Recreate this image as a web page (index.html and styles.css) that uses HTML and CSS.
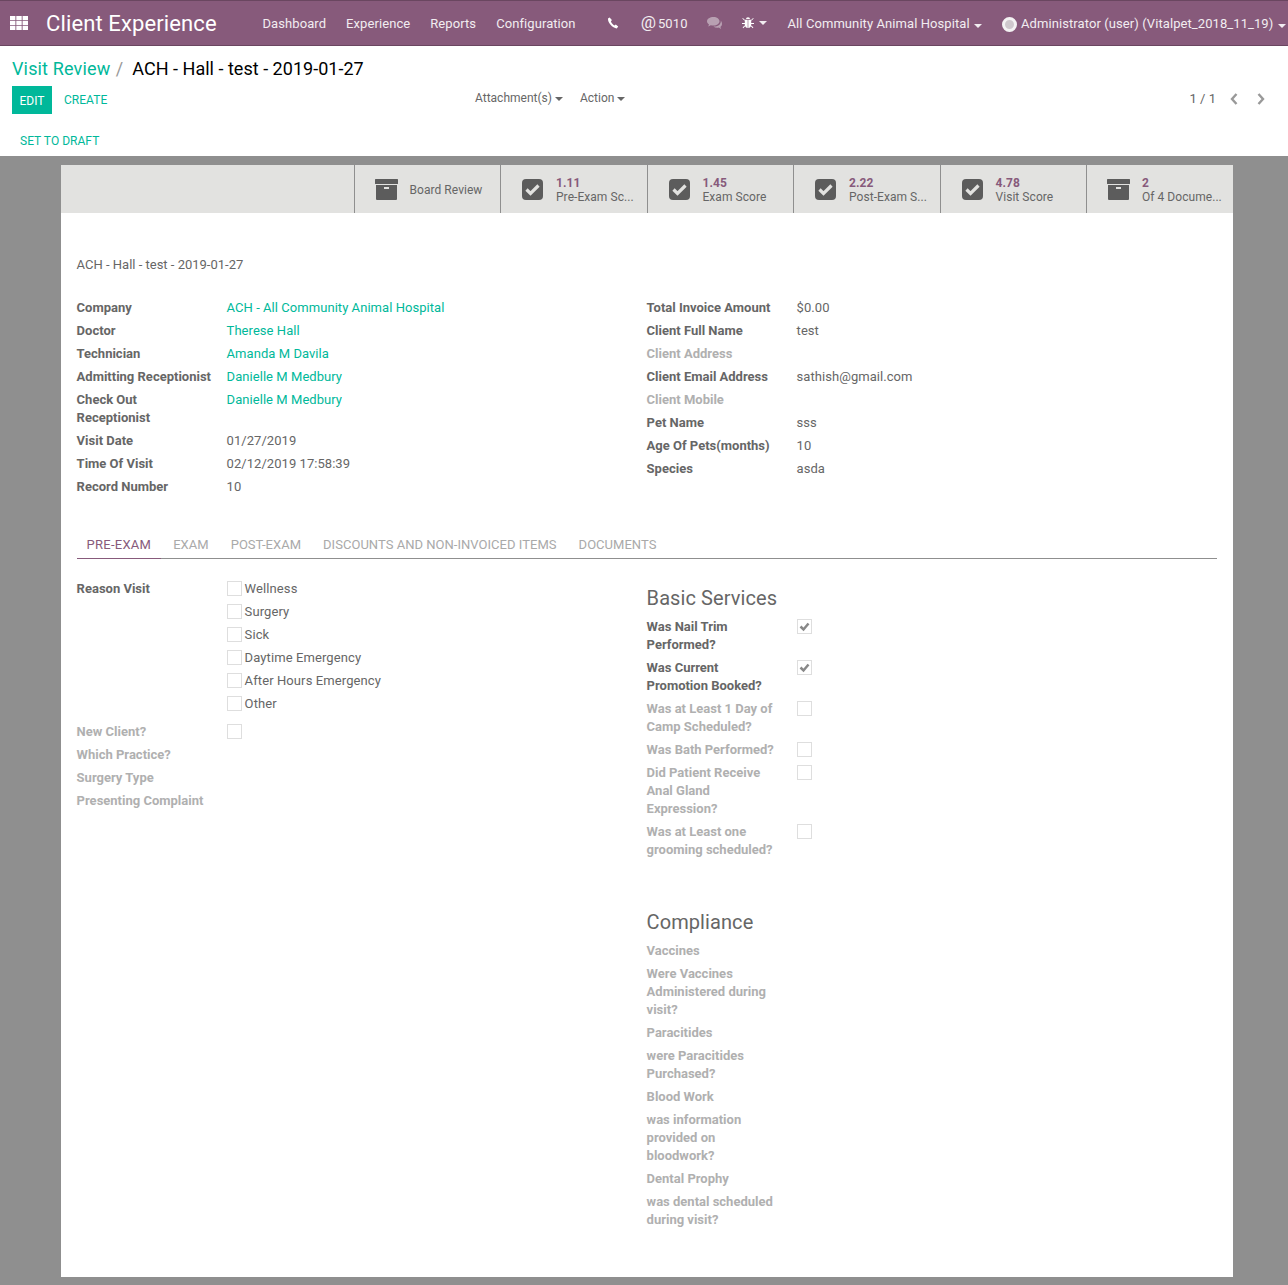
FILE: index.html
```html
<!doctype html>
<html>
  <head>
    <meta charset="utf-8">
    <title>Visit Review - Client Experience</title>
    <link rel="stylesheet" href="styles.css">
  </head>
  <body>
    <svg class="defs" width="0" height="0">
      <symbol id="archive" viewBox="0 0 23 21">
        <rect x="0" y="0" width="23" height="5" rx="0.5"/>
        <path d="M1 6h21v14a1 1 0 0 1-1 1H2a1 1 0 0 1-1-1z"/>
        <rect x="9" y="8" width="5" height="2" fill="#e2e2e0"/>
      </symbol>
      <symbol id="check" viewBox="0 0 21 21">
        <rect width="21" height="21" rx="4"/>
        <path d="M4.5 10.5l4 4 8-8" fill="none" stroke="#e2e2e0" stroke-width="3.2"/>
      </symbol>
    </svg>

    <nav class="navbar">
      <svg class="apps-icon" viewBox="0 0 18 14">
        <path d="M0 0h5.400v4.200H0zM6.300 0h5.400v4.200H6.300zM12.600 0H18v4.200h-5.400zM0 4.900h5.400v4.200H0zM6.300 4.900h5.400v4.200H6.300zM12.600 4.900H18v4.200h-5.400zM0 9.800h5.400V14H0zM6.300 9.800h5.400V14H6.300zM12.600 9.800H18V14h-5.400z"/>
      </svg>
      <span class="brand">Client Experience</span>
      <a class="nav-link first">Dashboard</a>
      <a class="nav-link">Experience</a>
      <a class="nav-link">Reports</a>
      <a class="nav-link">Configuration</a>
      <div class="nav-right">
        <svg class="phone-icon" viewBox="0 0 12 12">
          <path d="M2.600.6L1 1.600C.5 5.600 5.500 11.200 9.800 11.400l1.400-1.800-2.400-2.200-1.400 1C6 7.600 4.600 6 3.900 4.400l1-1.300z"/>
        </svg>
        <span class="at">@</span><span class="phone-ext">5010</span>
        <svg class="chat-icon" viewBox="0 0 16 13">
          <path d="M6.500 0C3 0 0 1.800 0 4.300c0 1.300.8 2.400 2 3.200L1.200 9.500l2.600-1.200c.9.200 1.800.3 2.700.3 3.500 0 6-2 6-4.300S10 0 6.500 0z"/>
          <path d="M13.600 3.500c.2.300.2.600.2.900 0 3-3 5.200-6.800 5.200h-.6c1 .8 2.300 1.200 3.800 1.200.6 0 1.100-.1 1.600-.2l2.300 1.300-.7-2c1-.7 1.600-1.700 1.600-2.900 0-1.400-.5-2.500-1.400-3.500z"/>
        </svg>
        <svg class="bug-icon" viewBox="0 0 12 12">
          <path d="M4 2a2 1.800 0 0 1 4 0zM2.800 2.800h2.900V11C4 10.800 2.800 9.500 2.800 8zM6.300 2.800h2.900V8c0 1.500-1.200 2.800-2.900 3zM.9.900l2 2-.6.600-2-2zM11.100.9l-2 2 .6.600 2-2zM0 6h2.800v1H0zM9.200 6H12v1H9.200zM2.500 8.500l.6.700-1.800 2-.7-.7zM9.500 8.500l-.6.700 1.800 2 .7-.7z"/>
        </svg>
        <span class="caret"></span>
        <span class="company">All Community Animal Hospital <span class="caret"></span></span>
        <span class="avatar"></span>
        <span class="user">Administrator (user) (Vitalpet_2018_11_19) <span class="caret"></span></span>
      </div>
    </nav>

    <header class="control-panel">
      <div class="breadcrumb">
        <a class="crumb-link">Visit Review</a><span class="crumb-sep">/</span><span class="crumb-current">ACH - Hall - test - 2019-01-27</span>
      </div>
      <div class="cp-row">
        <div class="cp-buttons">
          <button class="btn-primary">EDIT</button>
          <a class="btn-link">CREATE</a>
        </div>
        <div class="cp-sidebar">
          <span class="cp-drop">Attachment(s)<span class="caret"></span></span>
          <span class="cp-drop">Action<span class="caret"></span></span>
        </div>
        <div class="pager">
          <span class="pager-count">1 / 1</span>
          <svg class="pager-arrow" viewBox="0 0 8 12"><path d="M6.500 1L2 6l4.500 5"/></svg>
          <svg class="pager-arrow" viewBox="0 0 8 12"><path d="M1.500 1L6 6l-4.500 5"/></svg>
        </div>
      </div>
      <div class="statusbar"><a class="btn-link">SET TO DRAFT</a></div>
    </header>

    <main class="sheet-bg">
      <div class="sheet">
        <div class="button-box">
          <div class="stat-btn">
            <svg class="stat-icon"><use href="#archive"/></svg>
            <span class="stat-plain">Board Review</span>
          </div>
          <div class="stat-btn">
            <svg class="stat-icon"><use href="#check"/></svg>
            <span class="stat-info"><b>1.11</b><span>Pre-Exam Sc...</span></span>
          </div>
          <div class="stat-btn">
            <svg class="stat-icon"><use href="#check"/></svg>
            <span class="stat-info"><b>1.45</b><span>Exam Score</span></span>
          </div>
          <div class="stat-btn">
            <svg class="stat-icon"><use href="#check"/></svg>
            <span class="stat-info"><b>2.22</b><span>Post-Exam S...</span></span>
          </div>
          <div class="stat-btn">
            <svg class="stat-icon"><use href="#check"/></svg>
            <span class="stat-info"><b>4.78</b><span>Visit Score</span></span>
          </div>
          <div class="stat-btn">
            <svg class="stat-icon"><use href="#archive"/></svg>
            <span class="stat-info"><b>2</b><span>Of 4 Docume...</span></span>
          </div>
        </div>

        <div class="sheet-body">
          <div class="record-title">ACH - Hall - test - 2019-01-27</div>

          <div class="columns info-columns">
            <div>
              <div class="field"><label>Company</label><a>ACH - All Community Animal Hospital</a></div>
              <div class="field"><label>Doctor</label><a>Therese Hall</a></div>
              <div class="field"><label>Technician</label><a>Amanda M Davila</a></div>
              <div class="field"><label>Admitting Receptionist</label><a>Danielle M Medbury</a></div>
              <div class="field"><label>Check Out Receptionist</label><a>Danielle M Medbury</a></div>
              <div class="field"><label>Visit Date</label><span>01/27/2019</span></div>
              <div class="field"><label>Time Of Visit</label><span>02/12/2019 17:58:39</span></div>
              <div class="field"><label>Record Number</label><span>10</span></div>
            </div>
            <div>
              <div class="field"><label>Total Invoice Amount</label><span>$0.00</span></div>
              <div class="field"><label>Client Full Name</label><span>test</span></div>
              <div class="field empty"><label>Client Address</label></div>
              <div class="field"><label>Client Email Address</label><span>sathish@gmail.com</span></div>
              <div class="field empty"><label>Client Mobile</label></div>
              <div class="field"><label>Pet Name</label><span>sss</span></div>
              <div class="field"><label>Age Of Pets(months)</label><span>10</span></div>
              <div class="field"><label>Species</label><span>asda</span></div>
            </div>
          </div>

          <ul class="tabs">
            <li class="tab active">PRE-EXAM</li>
            <li class="tab">EXAM</li>
            <li class="tab">POST-EXAM</li>
            <li class="tab">DISCOUNTS AND NON-INVOICED ITEMS</li>
            <li class="tab">DOCUMENTS</li>
          </ul>

          <div class="columns tab-columns">
            <div>
              <div class="field">
                <label>Reason Visit</label>
                <div class="check-list">
                  <div class="check-row"><span class="checkbox"></span>Wellness</div>
                  <div class="check-row"><span class="checkbox"></span>Surgery</div>
                  <div class="check-row"><span class="checkbox"></span>Sick</div>
                  <div class="check-row"><span class="checkbox"></span>Daytime Emergency</div>
                  <div class="check-row"><span class="checkbox"></span>After Hours Emergency</div>
                  <div class="check-row"><span class="checkbox"></span>Other</div>
                </div>
              </div>
              <div class="field empty"><label>New Client?</label><span class="checkbox"></span></div>
              <div class="field empty"><label>Which Practice?</label></div>
              <div class="field empty"><label>Surgery Type</label></div>
              <div class="field empty"><label>Presenting Complaint</label></div>
            </div>
            <div>
              <h2 class="section-title">Basic Services</h2>
              <div class="field"><label>Was Nail Trim Performed?</label><span class="checkbox checked"><svg viewBox="0 0 13 13"><path d="M2.500 6.500l3 3 5-6"/></svg></span></div>
              <div class="field"><label>Was Current Promotion Booked?</label><span class="checkbox checked"><svg viewBox="0 0 13 13"><path d="M2.500 6.500l3 3 5-6"/></svg></span></div>
              <div class="field empty"><label>Was at Least 1 Day of Camp Scheduled?</label><span class="checkbox"></span></div>
              <div class="field empty"><label>Was Bath Performed?</label><span class="checkbox"></span></div>
              <div class="field empty"><label>Did Patient Receive Anal Gland Expression?</label><span class="checkbox"></span></div>
              <div class="field empty"><label>Was at Least one grooming scheduled?</label><span class="checkbox"></span></div>

              <h2 class="section-title spaced">Compliance</h2>
              <div class="field empty"><label>Vaccines</label></div>
              <div class="field empty"><label>Were Vaccines Administered during visit?</label></div>
              <div class="field empty"><label>Paracitides</label></div>
              <div class="field empty"><label>were Paracitides Purchased?</label></div>
              <div class="field empty"><label>Blood Work</label></div>
              <div class="field empty"><label>was information provided on bloodwork?</label></div>
              <div class="field empty"><label>Dental Prophy</label></div>
              <div class="field empty"><label>was dental scheduled during visit?</label></div>
            </div>
          </div>
        </div>
      </div>
    </main>
  </body>
</html>
```

FILE: styles.css
```css
body {
  margin: 0;
  font: 13px/18px Roboto, sans-serif;
  color: #666;
  background: #8f8f8f;
}

a {
  color: #00b89a;
}

label {
  font-weight: bold;
}

.defs {
  position: absolute;
}

.caret {
  display: inline-block;
  width: 0;
  height: 0;
  margin-left: 3px;
  vertical-align: middle;
  border-top: 4px solid;
  border-left: 4px solid transparent;
  border-right: 4px solid transparent;
}

/* top bar */
.navbar {
  display: flex;
  align-items: center;
  height: 44px;
  background: #875a7b;
  border-top: 1px solid #6a4660;
  border-bottom: 1px solid #6a4660;
  color: #f2edf1;
  white-space: nowrap;
  letter-spacing: 0.08px;
}

.navbar > *, .nav-right > * {
  flex: none;
}

.navbar span, .nav-link {
  position: relative;
  top: 1px;
}

.navbar .caret {
  margin-left: 1px;
}

.apps-icon {
  width: 18px;
  height: 14px;
  margin-left: 10px;
  fill: #fff;
}

.brand {
  margin-left: 18px;
  font-size: 22px;
  color: #fff;
  width: 206.5px;
  letter-spacing: 0.12px;
}

.nav-link {
  padding: 0 10px;
  color: #f2edf1;
}

.nav-right {
  display: flex;
  align-items: center;
  margin-left: 21px;
}

.phone-icon {
  width: 12px;
  height: 12px;
  fill: #fff;
}

.navbar .at {
  top: -1px;
  margin-left: 22px;
  font-size: 17px;
}

.phone-ext {
  margin-left: 2px;
}

.chat-icon {
  width: 16px;
  height: 13px;
  margin-left: 19px;
  fill: #b8a0b2;
}

.bug-icon {
  width: 12px;
  height: 12px;
  margin-left: 19px;
  fill: #fff;
}

.nav-right > .caret {
  top: 0;
  margin-left: 5px;
}

.company {
  margin-left: 21px;
}

.avatar {
  box-sizing: border-box;
  width: 15px;
  height: 15px;
  margin-left: 20px;
  border: 3px solid #f4f2f3;
  border-radius: 50%;
  background: #cfc8cd;
}

.user {
  margin-left: 4px;
}

/* control panel */
.control-panel {
  height: 110px;
  background: #fff;
  padding: 0 12px;
}

.breadcrumb {
  padding-top: 11px;
  font-size: 18px;
  line-height: 24px;
  color: #000;
}

.crumb-link {
  color: #00b89a;
  letter-spacing: 0.15px;
}

.crumb-sep {
  margin: 0 9px 0 5.5px;
  color: #999;
}

.crumb-current {
  letter-spacing: 0.02px;
}

.cp-row {
  display: flex;
  margin-top: 5px;
  height: 28px;
}

.cp-buttons {
  display: flex;
  align-items: center;
  width: 463px;
  line-height: 30px;
}

.btn-primary {
  width: 40px;
  height: 28px;
  padding: 2px 0 0;
  border: 0;
  background: #00b89a;
  color: #fff;
  font: 12px Roboto, sans-serif;
}

.btn-link {
  font-size: 12px;
  letter-spacing: 0.03px;
}

.cp-buttons .btn-link {
  margin-left: 12px;
}

.cp-sidebar {
  display: flex;
  gap: 17px;
  margin-top: 3px;
  font-size: 12px;
}

.pager {
  display: flex;
  align-items: center;
  margin-left: auto;
  margin-top: -1px;
  height: 28px;
  padding-right: 11px;
}

.pager-arrow {
  width: 8px;
  height: 12px;
  margin-left: 19px;
  fill: none;
  stroke: #999;
  stroke-width: 2.400;
}

.pager-count + .pager-arrow {
  margin-left: 14px;
}

.statusbar {
  padding: 8px 0 0 8px;
  height: 20px;
  line-height: 38px;
}

/* sheet */
.sheet-bg {
  padding: 9px 55px 8px 61px;
}

.sheet {
  height: 1112px;
  background: #fff;
}

.button-box {
  display: flex;
  justify-content: flex-end;
  height: 48px;
  padding-right: 0.5px;
  background: #e2e2e0;
}

.stat-btn {
  display: flex;
  align-items: center;
  box-sizing: border-box;
  width: 146.5px;
  padding-left: 20px;
  border-left: 1px solid #8f8f8f;
  color: #666;
  font-size: 12px;
  line-height: 14px;
  letter-spacing: 0.05px;
}

.stat-icon {
  flex: none;
  width: 23px;
  height: 21px;
  fill: #5c5c5c;
}

.stat-plain {
  margin: 2px 0 0 12px;
}

.stat-info {
  display: flex;
  flex-direction: column;
  margin-left: 12px;
  padding-top: 1px;
}

.stat-info b {
  color: #875a7b;
}

.sheet-body {
  padding: 43px 16.4px 0 15.6px;
}

.field a, .field > span {
  letter-spacing: 0.05px;
}

.record-title {
  height: 18px;
}

.columns {
  display: grid;
  grid-template-columns: 570px 1fr;
}

.info-columns {
  margin-top: 25px;
}

.field {
  display: grid;
  grid-template-columns: 136px 1fr;
  column-gap: 14px;
  padding-bottom: 5px;
}

.field.empty label {
  color: #b0b0b0;
}

.tabs {
  display: flex;
  gap: 2px;
  margin: 29px 0 21px;
  padding: 0;
  list-style: none;
  border-bottom: 1px solid #8f8f8f;
}

.tab {
  padding: 6px 10px 4px;
  color: #a9a9a9;
  letter-spacing: 0.03px;
}

.tab.active {
  color: #875a7b;
  margin-bottom: -1px;
  border-bottom: 1px solid #875a7b;
  letter-spacing: 0.25px;
}

.check-row {
  display: flex;
  padding-bottom: 5px;
  letter-spacing: 0.1px;
}

.check-list {
  margin-bottom: -5px;
}

.checkbox {
  display: block;
  box-sizing: border-box;
  flex: none;
  width: 15px;
  height: 15px;
  margin: 1px 3px 0 0;
  border: 1px solid #dedede;
}

.checkbox svg {
  display: block;
  fill: none;
  stroke: #888;
  stroke-width: 2.500;
}

.tab-columns > div:first-child > .field:first-child {
  padding-bottom: 10px;
}

.section-title {
  margin: 0;
  padding-bottom: 2px;
  font-size: 20px;
  font-weight: normal;
  line-height: 36px;
  color: #666;
  letter-spacing: 0.08px;
}

.section-title.spaced {
  margin-top: 40px;
}
```
